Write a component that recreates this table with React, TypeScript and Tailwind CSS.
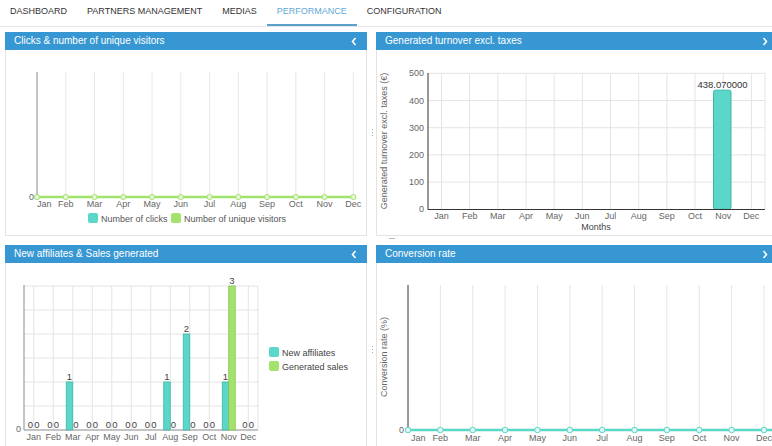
import React from "react";

const MONTHS = ["Jan", "Feb", "Mar", "Apr", "May", "Jun", "Jul", "Aug", "Sep", "Oct", "Nov", "Dec"];
const TEAL = "#5ad7c8";
const TEAL_DARK = "#3fb5a7";
const GREEN = "#a4e26e";
const GREEN_DARK = "#86c653";
const FONT = "Liberation Sans, Arial, sans-serif";

function Chevron({ dir }: { dir: "left" | "right" }) {
  return (
    <svg width="6" height="9" viewBox="0 0 6 9" className="block">
      {dir === "left" ? (
        <polyline points="4.5,1 1.5,4.5 4.5,8" fill="none" stroke="#fff" strokeWidth="1.6" />
      ) : (
        <polyline points="1.5,1 4.5,4.5 1.5,8" fill="none" stroke="#fff" strokeWidth="1.6" />
      )}
    </svg>
  );
}

function Panel({
  title,
  dir,
  bodyH,
  children,
}: {
  title: string;
  dir: "left" | "right";
  bodyH: string;
  children: React.ReactNode;
}) {
  return (
    <div className="flex flex-col">
      <div className="h-[18px] bg-[#3797d3] flex items-center justify-between pl-[9px] pr-[10px]">
        <span className="text-[10px] leading-none text-white">{title}</span>
        <Chevron dir={dir} />
      </div>
      <div className={`border border-t-0 border-[#e3e3e3] bg-white overflow-hidden ${bodyH}`}>{children}</div>
    </div>
  );
}

function ClicksChart() {
  const xs = MONTHS.map((_, i) => 37 + 28.76 * i);
  return (
    <svg width="360" height="185" viewBox="6 50 360 185" className="block" fontFamily={FONT}>
      {xs.slice(1).map((x, i) => (
        <line key={i} x1={x} x2={x} y1={72} y2={197} stroke="#e8e8e8" strokeWidth="1" />
      ))}
      <line x1={37} x2={37} y1={72} y2={197} stroke="#8a8a8a" strokeWidth="1" />
      <text x={34} y={200} fontSize="9" fill="#666" textAnchor="end">0</text>
      <line x1={37} x2={354} y1={197} y2={197} stroke={GREEN} strokeWidth="2.5" />
      {xs.map((x, i) => (
        <circle key={i} cx={x} cy={197} r={2.6} fill="#e4f7d6" stroke={GREEN} strokeWidth="1" />
      ))}
      {MONTHS.map((m, i) => (
        <text key={m} x={i === 0 ? 37 : xs[i]} y={206.5} fontSize="9" fill="#666" textAnchor={i === 0 ? "start" : "middle"}>
          {m}
        </text>
      ))}
      <rect x={88} y={213} width={10} height={10} rx={2} fill={TEAL} />
      <text x={101} y={221.5} fontSize="9" fill="#555">Number of clicks</text>
      <rect x={171} y={213} width={10} height={10} rx={2} fill={GREEN} />
      <text x={184} y={221.5} fontSize="9" fill="#555">Number of unique visitors</text>
    </svg>
  );
}

function TurnoverChart() {
  const xs = MONTHS.map((_, i) => 441.5 + 28.17 * i);
  const ticks = [0, 100, 200, 300, 400, 500];
  const yOf = (v: number) => 209.3 - v * 0.272;
  return (
    <svg width="400" height="185" viewBox="377 50 400 185" className="block" fontFamily={FONT}>
      <text
        x={387}
        y={141}
        fontSize="9"
        fill="#666"
        textAnchor="middle"
        transform="rotate(-90 387 141)"
      >
        Generated turnover excl. taxes (€)
      </text>
      {ticks.slice(1).map((t) => (
        <line key={t} x1={428} x2={765} y1={yOf(t)} y2={yOf(t)} stroke="#e4e4e4" strokeWidth="1" />
      ))}
      {[...xs, 765].map((x, i) => (
        <line key={i} x1={x} x2={x} y1={73} y2={209} stroke="#e4e4e4" strokeWidth="1" />
      ))}
      {ticks.map((t) => (
        <text key={t} x={424} y={yOf(t) + 3} fontSize="9" fill="#666" textAnchor="end">
          {t}
        </text>
      ))}
      <rect x={713.5} y={yOf(438.07)} width={17.5} height={209.3 - yOf(438.07)} rx={2} fill={TEAL} stroke={TEAL_DARK} strokeWidth="1" />
      <text x={722.5} y={88} fontSize="9.5" fill="#333" textAnchor="middle">438.070000</text>
      <line x1={428} x2={428} y1={73} y2={209.5} stroke="#333" strokeWidth="1" />
      <line x1={428} x2={765} y1={209.5} y2={209.5} stroke="#333" strokeWidth="1" />
      {MONTHS.map((m, i) => (
        <text key={m} x={xs[i]} y={218.5} fontSize="9" fill="#666" textAnchor="middle">
          {m}
        </text>
      ))}
      <text x={596} y={229.5} fontSize="9" fill="#444" textAnchor="middle">Months</text>
    </svg>
  );
}

function AffiliatesChart() {
  const aff = [0, 0, 1, 0, 0, 0, 0, 1, 2, 0, 1, 0];
  const sales = [0, 0, 0, 0, 0, 0, 0, 0, 0, 0, 3, 0];
  const cs = MONTHS.map((_, i) => 33.75 + 19.5 * i);
  const grid = [286, 310, 334, 358, 382, 406];
  const yOf = (v: number) => 430 - 48 * v;
  return (
    <svg width="360" height="200" viewBox="6 263 360 200" className="block" fontFamily={FONT}>
      {grid.map((y) => (
        <line key={y} x1={24} x2={258} y1={y} y2={y} stroke="#e4e4e4" strokeWidth="1" />
      ))}
      {[...cs, 258].map((x, i) => (
        <line key={i} x1={x} x2={x} y1={286} y2={430} stroke="#e4e4e4" strokeWidth="1" />
      ))}
      <line x1={24} x2={24} y1={285} y2={430} stroke="#8a8a8a" strokeWidth="1" />
      <line x1={24} x2={258} y1={430} y2={430} stroke="#8a8a8a" strokeWidth="1" />
      <text x={21} y={432} fontSize="9" fill="#666" textAnchor="end">0</text>
      {cs.map((c, i) => (
        <g key={i}>
          {aff[i] > 0 && (
            <rect x={c - 6.5} y={yOf(aff[i])} width={6.5} height={430 - yOf(aff[i])} fill={TEAL} stroke={TEAL_DARK} strokeWidth="0.8" />
          )}
          {sales[i] > 0 && (
            <rect x={c} y={yOf(sales[i])} width={6.5} height={430 - yOf(sales[i])} fill={GREEN} stroke={GREEN_DARK} strokeWidth="0.8" />
          )}
          <text x={c - 3.25} y={yOf(aff[i]) - 2} fontSize="9.5" fill="#444" textAnchor="middle">
            {aff[i]}
          </text>
          <text x={c + 3.25} y={yOf(sales[i]) - 2} fontSize="9.5" fill="#444" textAnchor="middle">
            {sales[i]}
          </text>
          <text x={c} y={439.5} fontSize="9" fill="#666" textAnchor="middle">
            {MONTHS[i]}
          </text>
        </g>
      ))}
      <rect x={269} y={347} width={10} height={10} rx={2} fill={TEAL} />
      <text x={282} y={355.5} fontSize="9" fill="#444">New affiliates</text>
      <rect x={269} y={361} width={10} height={10} rx={2} fill={GREEN} />
      <text x={282} y={369.5} fontSize="9" fill="#444">Generated sales</text>
    </svg>
  );
}

function ConversionChart() {
  const ps = MONTHS.map((_, i) => 408 + 32.36 * i);
  return (
    <svg width="400" height="200" viewBox="377 263 400 200" className="block" fontFamily={FONT}>
      <text x={387} y={357} fontSize="9" fill="#666" textAnchor="middle" transform="rotate(-90 387 357)">
        Conversion rate (%)
      </text>
      {ps.slice(1).map((x, i) => (
        <line key={i} x1={x} x2={x} y1={285} y2={430} stroke="#e6e6e6" strokeWidth="1" />
      ))}
      <line x1={408} x2={408} y1={285} y2={430} stroke="#333" strokeWidth="1" />
      <text x={404} y={433} fontSize="9" fill="#666" textAnchor="end">0</text>
      <line x1={408} x2={776} y1={430} y2={430} stroke={TEAL} strokeWidth="2.5" />
      {ps.map((x, i) => (
        <circle key={i} cx={x} cy={430} r={2.8} fill="#def6f2" stroke={TEAL} strokeWidth="1" />
      ))}
      {MONTHS.map((m, i) => (
        <text key={m} x={i === 0 ? 411 : ps[i]} y={440.5} fontSize="9" fill="#666" textAnchor={i === 0 ? "start" : "middle"}>
          {m}
        </text>
      ))}
    </svg>
  );
}

const NAV = ["DASHBOARD", "PARTNERS MANAGEMENT", "MEDIAS", "PERFORMANCE", "CONFIGURATION"];

function Handle({ pos }: { pos: string }) {
  return (
    <div className={`absolute flex flex-col gap-[2px] ${pos}`}>
      <div className="w-px h-px bg-[#aaa]" />
      <div className="w-px h-px bg-[#aaa]" />
      <div className="w-px h-px bg-[#aaa]" />
    </div>
  );
}

export default function App() {
  return (
    <div className="relative w-[772px] h-[446px] overflow-hidden bg-white font-['Liberation_Sans',Arial,sans-serif]">
      <nav className="flex h-[27px] border-b border-[#e6e6e6]">
        {NAV.map((n) =>
          n === "PERFORMANCE" ? (
            <div key={n} className="h-[26px] px-[10px] flex items-center border-b-2 border-[#5b9fcb] text-[9px] text-[#62a8d8] whitespace-nowrap">
              {n}
            </div>
          ) : (
            <div key={n} className="h-[26px] px-[10px] flex items-center border-b-2 border-transparent text-[9px] text-[#333] whitespace-nowrap">
              {n}
            </div>
          )
        )}
      </nav>
      <div className="mt-[5px] ml-[5px] grid grid-cols-[362px_402px] gap-x-[9px] gap-y-[9px]">
        <Panel title="Clicks & number of unique visitors" dir="left" bodyH="h-[186px]">
          <ClicksChart />
        </Panel>
        <Panel title="Generated turnover excl. taxes" dir="right" bodyH="h-[186px]">
          <TurnoverChart />
        </Panel>
        <Panel title="New affiliates & Sales generated" dir="left" bodyH="h-[200px]">
          <AffiliatesChart />
        </Panel>
        <Panel title="Conversion rate" dir="right" bodyH="h-[200px]">
          <ConversionChart />
        </Panel>
      </div>
      <Handle pos="left-[372px] top-[129px]" />
      <Handle pos="left-[372px] top-[346px]" />
      <div className="absolute left-[389px] top-[238px] w-[6px] h-px bg-[#bbb]" />
    </div>
  );
}
